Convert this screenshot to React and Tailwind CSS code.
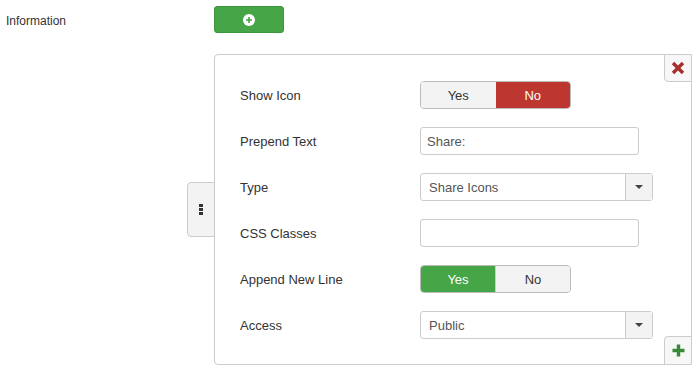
import React from 'react';

const Toggle = ({ value }) => {
  const yesOn = value === 'yes';
  return (
    <div className="flex h-[28px] w-[151px] rounded-[4px] border border-[#bbb] overflow-hidden text-[13px]">
      <div
        className={
          yesOn
            ? 'flex-1 flex items-center justify-center pt-px bg-[#46a546] text-white'
            : 'flex-1 flex items-center justify-center pt-px bg-[#f3f3f3] text-[#333]'
        }
      >
        Yes
      </div>
      <div
        className={
          yesOn
            ? 'flex-1 flex items-center justify-center pt-px bg-[#f3f3f3] text-[#333] border-l border-[#ccc]'
            : 'flex-1 flex items-center justify-center pt-px bg-[#bd362f] text-white'
        }
      >
        No
      </div>
    </div>
  );
};

const TextInput = ({ value }) => (
  <div className="h-[28px] w-[219px] rounded-[3px] border border-[#ccc] bg-white flex items-center pt-px px-[6px] text-[13px] text-[#555]">
    {value}
  </div>
);

const Select = ({ value }) => (
  <div className="h-[28px] w-[233px] rounded-[3px] border border-[#ccc] bg-white flex text-[13px] text-[#555]">
    <div className="flex-1 flex items-center pt-px px-[8px]">{value}</div>
    <div className="w-[27px] border-l border-[#ccc] bg-[#f3f3f3] flex items-center justify-center">
      <svg width="8" height="4" viewBox="0 0 8 4">
        <path d="M0 0 L8 0 L4 4 Z" fill="#444" />
      </svg>
    </div>
  </div>
);

const Row = ({ label, children }) => (
  <div className="flex items-center h-[28px]">
    <div className="w-[180px] pt-[2px] text-[13px] text-[#333]">{label}</div>
    {children}
  </div>
);

export default function App() {
  return (
    <div
      className="w-[699px] h-[371px] bg-white overflow-hidden"
      style={{ fontFamily: '"Liberation Sans", Arial, sans-serif' }}
    >
      {/* field header */}
      <div className="flex items-center pt-[6px]">
        <div className="w-[214px] pl-[6px] pt-[2px] text-[12px] text-[#333]">Information</div>
        <div className="w-[70px] h-[27px] rounded-[3px] bg-[#46a546] border border-[#3d963d] flex items-center justify-center">
          <svg width="12" height="12" viewBox="0 0 12 12">
            <circle cx="6" cy="6" r="6" fill="#fff" />
            <path d="M6 3 V9 M3 6 H9" stroke="#46a546" strokeWidth="1.6" />
          </svg>
        </div>
      </div>

      {/* subform row */}
      <div className="flex items-center mt-[21px] pl-[187px]">
        <div className="w-[28px] h-[55px] -mr-px rounded-l-[4px] border border-[#ccc] bg-[#f3f3f3] flex items-center justify-center">
          <div className="flex flex-col gap-[1px]">
            <div className="w-[4px] h-[3px] bg-[#333]" />
            <div className="w-[4px] h-[3px] bg-[#333]" />
            <div className="w-[4px] h-[3px] bg-[#333]" />
          </div>
        </div>
        <div className="relative w-[478px] h-[311px] border border-[#ccc] rounded-[4px] bg-white">
          <div className="flex flex-col gap-[18px] pt-[26px] pl-[25px]">
            <Row label="Show Icon">
              <Toggle value="no" />
            </Row>
            <Row label="Prepend Text">
              <TextInput value="Share:" />
            </Row>
            <Row label="Type">
              <Select value="Share Icons" />
            </Row>
            <Row label="CSS Classes">
              <TextInput value="" />
            </Row>
            <Row label="Append New Line">
              <Toggle value="yes" />
            </Row>
            <Row label="Access">
              <Select value="Public" />
            </Row>
          </div>

          <div className="absolute top-[-1px] right-[-1px] w-[28px] h-[28px] border border-[#ccc] rounded-bl-[4px] bg-[#f7f7f7] flex items-center justify-center">
            <svg width="14" height="14" viewBox="0 0 14 14">
              <path d="M2 2 L12 12 M12 2 L2 12" stroke="#a8302b" strokeWidth="3.4" />
            </svg>
          </div>
          <div className="absolute bottom-[-1px] right-[-1px] w-[28px] h-[29px] border border-[#ccc] rounded-tl-[4px] bg-[#f7f7f7] flex items-center justify-center">
            <svg width="13" height="13" viewBox="0 0 13 13">
              <path d="M6.5 0.5 V12.5 M0.5 6.5 H12.5" stroke="#378a37" strokeWidth="3.4" />
            </svg>
          </div>
        </div>
      </div>
    </div>
  );
}
